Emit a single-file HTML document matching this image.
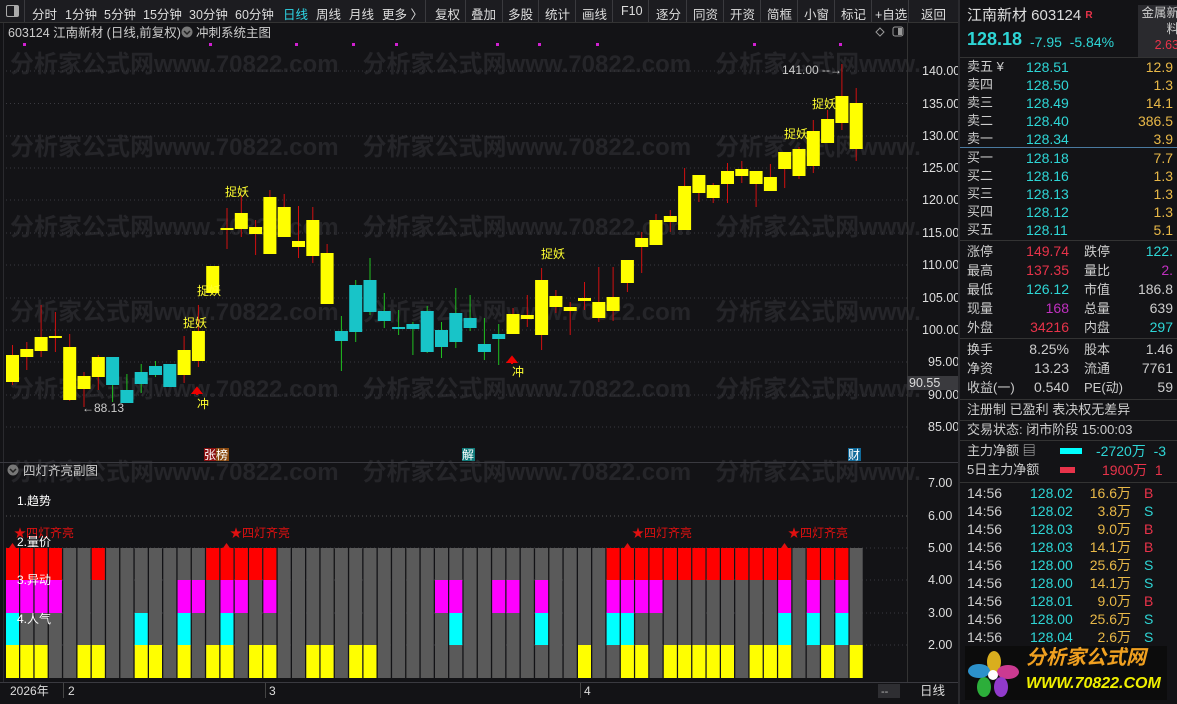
<!DOCTYPE html><html><head><meta charset="utf-8"><style>
body{margin:0;width:1177px;height:704px;background:#131316;overflow:hidden;font-family:"Liberation Sans","Noto Sans CJK SC",sans-serif;position:relative}
.a{position:absolute;white-space:nowrap}
#tb{position:absolute;left:0;top:0;width:958px;height:22px;background:#1c1c20;border-bottom:1px solid #333;font-size:12.5px;color:#ddd}
#tb span{position:absolute;top:4px}
.sep{position:absolute;top:0;width:1px;height:22px;background:#3a3a3e}
#rp{position:absolute;left:958px;top:0;width:219px;height:704px;background:#131316;border-left:2px solid #2a2a2e;font-size:13px;color:#ccc}
#rp .a{line-height:16px}
.hl{position:absolute;left:0;width:219px;height:1px;background:#333}
.c{color:#2ed6d6}.y{color:#e8b848}.r{color:#e8334a}.m{color:#c030c0}
</style></head><body>
<div id="tb">
<div style="position:absolute;left:6px;top:5px;width:11px;height:10px;border:1px solid #aaa;border-radius:2px"><div style="position:absolute;right:0;top:0;width:4px;height:10px;background:#aaa"></div></div>
<div class="sep" style="left:24px"></div>
<span style="left:32px">分时</span><span style="left:65px">1分钟</span><span style="left:104px">5分钟</span><span style="left:143px">15分钟</span><span style="left:189px">30分钟</span><span style="left:235px">60分钟</span><span style="left:283px;color:#2ed6e6">日线</span><span style="left:316px">周线</span><span style="left:349px">月线</span><span style="left:382px">更多 〉</span>
<div class="sep" style="left:425px"></div><span style="left:435px">复权</span><div class="sep" style="left:465px"></div><span style="left:471px">叠加</span><div class="sep" style="left:502px"></div><span style="left:508px">多股</span><div class="sep" style="left:538px"></div><span style="left:545px">统计</span><div class="sep" style="left:575px"></div><span style="left:582px">画线</span><div class="sep" style="left:612px"></div><span style="left:621px">F10</span><div class="sep" style="left:648px"></div><span style="left:656px">逐分</span><div class="sep" style="left:686px"></div><span style="left:693px">同资</span><div class="sep" style="left:723px"></div><span style="left:730px">开资</span><div class="sep" style="left:760px"></div><span style="left:767px">简框</span><div class="sep" style="left:797px"></div><span style="left:804px">小窗</span><div class="sep" style="left:834px"></div><span style="left:841px">标记</span><div class="sep" style="left:871px"></div><span style="left:875px">+自选</span><div class="sep" style="left:908px"></div><span style="left:921px">返回</span>
</div>
<svg class="a" style="left:0;top:0" width="958" height="704" font-family="Liberation Sans,Noto Sans CJK SC,sans-serif">
<g fill="#252529" font-size="24" font-weight="bold">
<text x="10" y="72">分析家公式网www.70822.com　分析家公式网www.70822.com　分析家公式网www.</text>
<text x="10" y="155">分析家公式网www.70822.com　分析家公式网www.70822.com　分析家公式网www.</text>
<text x="10" y="235">分析家公式网www.70822.com　分析家公式网www.70822.com　分析家公式网www.</text>
<text x="10" y="320">分析家公式网www.70822.com　分析家公式网www.70822.com　分析家公式网www.</text>
<text x="10" y="397">分析家公式网www.70822.com　分析家公式网www.70822.com　分析家公式网www.</text>
<text x="10" y="480">分析家公式网www.70822.com　分析家公式网www.70822.com　分析家公式网www.</text>
</g>
<g stroke="#3a3a40" stroke-dasharray="1,3">
<line x1="6" x2="907" y1="71" y2="71"/><line x1="6" x2="907" y1="103.5" y2="103.5"/><line x1="6" x2="907" y1="136" y2="136"/><line x1="6" x2="907" y1="168" y2="168"/><line x1="6" x2="907" y1="200" y2="200"/><line x1="6" x2="907" y1="233" y2="233"/><line x1="6" x2="907" y1="265" y2="265"/><line x1="6" x2="907" y1="298" y2="298"/><line x1="6" x2="907" y1="330" y2="330"/><line x1="6" x2="907" y1="362" y2="362"/><line x1="6" x2="907" y1="395" y2="395"/><line x1="6" x2="907" y1="427" y2="427"/>
<line x1="6" x2="907" y1="516" y2="516"/><line x1="6" x2="907" y1="548" y2="548"/><line x1="6" x2="907" y1="580" y2="580"/><line x1="6" x2="907" y1="613" y2="613"/><line x1="6" x2="907" y1="645" y2="645"/>
</g>
<line x1="907.5" x2="907.5" y1="23" y2="682" stroke="#333"/>
<line x1="3.5" x2="3.5" y1="23" y2="682" stroke="#2a2a2e"/>
<line x1="0" x2="958" y1="462.5" y2="462.5" stroke="#3a3a40"/>
<line x1="0" x2="958" y1="682.5" y2="682.5" stroke="#3a3a40"/>
<text x="8" y="37" fill="#ccc" font-size="12.5">603124 江南新材 (日线,前复权)</text>
<circle cx="187" cy="32" r="5.5" fill="#777"/><path d="M184 31l3 3 3-3" stroke="#222" fill="none" stroke-width="1.5"/>
<text x="196" y="37" fill="#ccc" font-size="12.5">冲刺系统主图</text>
<path d="M880 28l4 4-4 4-4-4z" stroke="#999" fill="none"/><rect x="893" y="27" width="10" height="9" rx="2" stroke="#999" fill="none"/><rect x="898" y="28" width="4" height="7" fill="#999"/>
<g fill="#d020d0"><rect x="23" y="43" width="3" height="3"/><rect x="209" y="43" width="3" height="3"/><rect x="295" y="43" width="3" height="3"/><rect x="352" y="43" width="3" height="3"/><rect x="395" y="43" width="3" height="3"/><rect x="496" y="43" width="3" height="3"/><rect x="538" y="43" width="3" height="3"/><rect x="596" y="43" width="3" height="3"/><rect x="753" y="43" width="3" height="3"/><rect x="839" y="43" width="3" height="3"/></g>
<g fill="#ddd" font-size="12.5">
<text x="922" y="75">140.00</text><text x="922" y="108">135.00</text><text x="922" y="140">130.00</text><text x="922" y="172">125.00</text><text x="922" y="204">120.00</text><text x="922" y="237">115.00</text><text x="922" y="269">110.00</text><text x="922" y="302">105.00</text><text x="922" y="334">100.00</text><text x="928" y="366">95.00</text><text x="928" y="399">90.00</text><text x="928" y="431">85.00</text>
<text x="928" y="487">7.00</text><text x="928" y="520">6.00</text><text x="928" y="552">5.00</text><text x="928" y="584">4.00</text><text x="928" y="617">3.00</text><text x="928" y="649">2.00</text>
</g>
<rect x="907" y="376" width="51" height="14" fill="#3a3a3e"/><text x="909" y="387" fill="#ddd" font-size="12.5">90.55</text>
<g id="cd"></g>
<g id="bars"></g>
<g font-size="12" fill="#ffff30">
<text x="225" y="196">捉妖</text><text x="197" y="295">捉妖</text><text x="183" y="327">捉妖</text><text x="541" y="258">捉妖</text><text x="784" y="138">捉妖</text><text x="812" y="108">捉妖</text>
<text x="197" y="408">冲</text><text x="512" y="376">冲</text>
</g>
<path d="M197 395v-6M193 393l4-5 4 5z" stroke="#e00" fill="#e00" stroke-width="2"/>
<path d="M512 364v-6M508 362l4-5 4 5z" stroke="#e00" fill="#e00" stroke-width="2"/>
<text x="82" y="412" fill="#ccc" font-size="12">←88.13</text>
<text x="782" y="74" fill="#ccc" font-size="12">141.00 --→</text>
<rect x="204" y="448" width="12" height="13" fill="#8a1010"/><rect x="216" y="448" width="13" height="13" fill="#8a4a10"/>
<text x="204" y="459" fill="#fff" font-size="12">张榜</text>
<rect x="462" y="448" width="13" height="13" fill="#107a7a"/><text x="462" y="459" fill="#fff" font-size="12">解</text>
<rect x="848" y="448" width="13" height="13" fill="#106a9a"/><text x="848" y="459" fill="#fff" font-size="12">财</text>
<circle cx="13" cy="470" r="5.5" fill="#777"/><path d="M10 469l3 3 3-3" stroke="#222" fill="none" stroke-width="1.5"/>
<text x="23" y="475" fill="#ccc" font-size="12.5">四灯齐亮副图</text>
<g fill="#fff" font-size="12"><text x="17" y="505">1.趋势</text></g>
<line x1="6" x2="907" y1="516" y2="516" stroke="#555" stroke-dasharray="1,3"/>
<g fill="#e01010" font-size="12"><text x="14" y="537">★四灯齐亮</text><text x="230" y="537">★四灯齐亮</text><text x="632" y="537">★四灯齐亮</text><text x="788" y="537">★四灯齐亮</text></g>
<g fill="#e01010"><path d="M9 548l3.5-5 3.5 5z"/><path d="M223 548l3.5-5 3.5 5z"/><path d="M624 548l3.5-5 3.5 5z"/><path d="M781 548l3.5-5 3.5 5z"/></g>
<g id="lbl" fill="#fff" font-size="12"><text x="17" y="546">2.量价</text><text x="17" y="584">3.异动</text><text x="17" y="623">4.人气</text></g>
<text x="10" y="695" fill="#ddd" font-size="12">2026年</text><text x="68" y="695" fill="#ddd" font-size="12">2</text><text x="269" y="695" fill="#ddd" font-size="12">3</text><text x="584" y="695" fill="#ddd" font-size="12">4</text>
<g stroke="#444"><line x1="63.5" x2="63.5" y1="683" y2="698"/><line x1="265.5" x2="265.5" y1="683" y2="698"/><line x1="580.5" x2="580.5" y1="683" y2="698"/></g>
<rect x="878" y="684" width="22" height="14" fill="#2e2e32"/><text x="881" y="695" fill="#bbb" font-size="11">--</text>
<text x="920" y="695" fill="#ddd" font-size="12.5">日线</text>
</svg>
<script>
var C=[["Y",355,382,345,385],["Y",349,357,342,370],["Y",337,351,305,357],["Y",336,338,312,352],["Y",347,400,334,401],["Y",376,389,372,407],["Y",357,377,355,390],["C",357,385,357,402],["C",390,403,374,403],["C",372,384,364,393],["C",366,375,361,377],["C",364,387,364,387],["Y",350,375,336,383],["Y",331,361,305,367],["Y",266,293,266,293],["Y",228,230,208,249],["Y",213,229,195,237],["Y",227,234,220,255],["Y",197,254,190,254],["Y",207,237,194,237],["Y",241,247,206,258],["Y",220,256,207,263],["Y",253,304,244,304],["C",331,341,316,371],["C",285,332,280,342],["C",280,312,258,315],["C",311,321,293,328],["C",327,329,310,335],["C",324,329,322,355],["C",311,352,306,353],["C",330,347,322,358],["C",313,342,288,348],["C",318,328,295,331],["C",344,352,318,360],["C",334,339,324,365],["Y",314,334,308,334],["Y",315,319,295,327],["Y",280,335,268,350],["Y",296,307,290,313],["Y",307,311,302,335],["Y",298,301,282,310],["Y",302,318,267,322],["Y",297,311,267,321],["Y",260,283,260,292],["Y",238,247,232,273],["Y",220,245,214,245],["Y",216,222,210,232],["Y",186,230,168,230],["Y",175,193,175,202],["Y",185,198,183,203],["Y",171,184,163,203],["Y",169,176,161,183],["Y",171,184,171,207],["Y",177,191,164,191],["Y",152,169,152,188],["Y",149,176,147,179],["Y",131,166,120,173],["Y",119,143,110,143],["Y",96,123,64,130],["Y",103,149,88,161]];
var R=[0,1,2,3,6,14,15,16,17,18,42,43,44,45,46,47,48,49,50,51,52,53,54,56,57,58],M=[0,1,2,3,12,13,15,16,18,30,31,34,35,37,42,43,44,45,54,56,58],Cy=[0,9,12,15,31,37,42,43,54,56,58],Yl=[0,1,2,5,6,9,10,12,14,15,17,18,21,22,24,25,40,43,44,46,47,48,49,50,52,53,54,57,59];
var s="",b="";
for(var i=0;i<60;i++){var x=6+14.3*i,c=C[i],yc=c[0]=="Y";
s+='<line x1="'+(x+6.5)+'" x2="'+(x+6.5)+'" y1="'+c[3]+'" y2="'+c[4]+'" stroke="'+(yc?"#d01010":"#20c020")+'"/>';
s+='<rect x="'+x+'" y="'+c[1]+'" width="13" height="'+Math.max(2,c[2]-c[1])+'" fill="'+(yc?"#ffff00":"#18c4c8")+'"/>';
b+='<rect x="'+x+'" y="548" width="13" height="130" fill="#5a5a5a"/>';
if(R.indexOf(i)>=0)b+='<rect x="'+x+'" y="548" width="13" height="32" fill="#ff0000"/>';
if(M.indexOf(i)>=0)b+='<rect x="'+x+'" y="580" width="13" height="33" fill="#ff00ff"/>';
if(Cy.indexOf(i)>=0)b+='<rect x="'+x+'" y="613" width="13" height="32" fill="#00ffff"/>';
if(Yl.indexOf(i)>=0)b+='<rect x="'+x+'" y="645" width="13" height="33" fill="#ffff00"/>';}
document.getElementById("cd").innerHTML=s;document.getElementById("bars").innerHTML=b;
var l=document.getElementById("lbl");l.parentNode.appendChild(l);
</script>
<div id="rp">
<div class="a" style="left:7px;top:8px;font-size:15px;color:#ddd">江南新材 603124 <span style="color:#e8334a;font-size:10px;font-weight:bold;vertical-align:top">R</span></div>
<div class="a c" style="left:7px;top:31px;font-size:18px;font-weight:bold">128.18</div>
<div class="a c" style="left:70px;top:34px;font-size:14px">-7.95 &nbsp;-5.84%</div>
<div class="a" style="left:178px;top:5px;width:41px;height:52px;background:#2a2a2e;font-size:12.5px;color:#ccc;line-height:16px;text-align:right">金属新<br>料<br><span class="r">2.63</span></div>
<div class="hl" style="top:57px"></div>
<div class="a" style="left:7px;top:58px;line-height:18px">卖五 ¥<br>卖四<br>卖三<br>卖二<br>卖一</div>
<div class="a c" style="left:66px;top:58px;line-height:18px;font-size:14px">128.51<br>128.50<br>128.49<br>128.40<br>128.34</div>
<div class="a y" style="right:6px;top:58px;line-height:18px;font-size:14px;text-align:right">12.9<br>1.3<br>14.1<br>386.5<br>3.9</div>
<div class="hl" style="top:147px;background:#4a7aa0"></div>
<div class="a" style="left:7px;top:149px;line-height:18px">买一<br>买二<br>买三<br>买四<br>买五</div>
<div class="a c" style="left:66px;top:149px;line-height:18px;font-size:14px">128.18<br>128.16<br>128.13<br>128.12<br>128.11</div>
<div class="a y" style="right:6px;top:149px;line-height:18px;font-size:14px;text-align:right">7.7<br>1.3<br>1.3<br>1.3<br>5.1</div>
<div class="hl" style="top:240px"></div>
<div class="a" style="left:7px;top:242px;line-height:19px">涨停<br>最高<br>最低<br>现量<br>外盘</div>
<div class="a" style="right:110px;top:242px;line-height:19px;font-size:14px;text-align:right"><span class="r">149.74</span><br><span class="r">137.35</span><br><span class="c">126.12</span><br><span class="m">168</span><br><span class="r">34216</span></div>
<div class="a" style="left:124px;top:242px;line-height:19px">跌停<br>量比<br>市值<br>总量<br>内盘</div>
<div class="a" style="right:6px;top:242px;line-height:19px;font-size:14px;text-align:right"><span class="c">122.</span><br><span class="m">2.</span><br>186.8<br>639<br><span class="c">297</span></div>
<div class="hl" style="top:338px"></div>
<div class="a" style="left:7px;top:340px;line-height:19px">换手<br>净资<br>收益(一)</div>
<div class="a" style="right:110px;top:340px;line-height:19px;font-size:14px;text-align:right">8.25%<br>13.23<br>0.540</div>
<div class="a" style="left:124px;top:340px;line-height:19px">股本<br>流通<br>PE(动)</div>
<div class="a" style="right:6px;top:340px;line-height:19px;font-size:14px;text-align:right">1.46<br>7761<br>59</div>
<div class="hl" style="top:399px"></div>
<div class="a" style="left:7px;top:402px">注册制 已盈利 表决权无差异</div>
<div class="hl" style="top:420px"></div>
<div class="a" style="left:7px;top:422px">交易状态: 闭市阶段 15:00:03</div>
<div class="hl" style="top:440px"></div>
<div class="a" style="left:7px;top:443px">主力净额 ▤</div>
<div class="a" style="left:100px;top:448px;width:22px;height:6px;background:#00ffff"></div>
<div class="a c" style="left:136px;top:443px;font-size:14px">-2720万 &nbsp;-3</div>
<div class="a" style="left:7px;top:462px">5日主力净额</div>
<div class="a" style="left:100px;top:467px;width:15px;height:6px;background:#e8334a"></div>
<div class="a r" style="left:142px;top:462px;font-size:14px">1900万 &nbsp;1</div>
<div class="hl" style="top:482px"></div>
<div class="a" style="left:7px;top:484px;line-height:18px;font-size:14px">14:56<br>14:56<br>14:56<br>14:56<br>14:56<br>14:56<br>14:56<br>14:56<br>14:56</div>
<div class="a c" style="left:70px;top:484px;line-height:18px;font-size:14px">128.02<br>128.02<br>128.03<br>128.03<br>128.00<br>128.00<br>128.01<br>128.00<br>128.04</div>
<div class="a y" style="right:48px;top:484px;line-height:18px;font-size:14px;text-align:right">16.6万<br>3.8万<br>9.0万<br>14.1万<br>25.6万<br>14.1万<br>9.0万<br>25.6万<br>2.6万</div>
<div class="a" style="left:184px;top:484px;line-height:18px;font-size:14px"><span class="r">B</span><br><span class="c">S</span><br><span class="r">B</span><br><span class="r">B</span><br><span class="c">S</span><br><span class="c">S</span><br><span class="r">B</span><br><span class="c">S</span><br><span class="c">S</span></div>
<div class="a" style="left:5px;top:646px;width:202px;height:54px;background:#0c0c0c"></div>
<svg class="a" style="left:8px;top:650px" width="52" height="48"><g opacity=".9"><ellipse cx="26" cy="12" rx="7" ry="11" fill="#f0c020"/><ellipse cx="40" cy="22" rx="11" ry="7" fill="#e040a0"/><ellipse cx="33" cy="37" rx="7" ry="10" fill="#a040e0"/><ellipse cx="16" cy="37" rx="7" ry="10" fill="#30c040"/><ellipse cx="11" cy="21" rx="11" ry="7" fill="#30a0e0"/></g><circle cx="25" cy="25" r="5" fill="#fff"/></svg>
<div class="a" style="left:66px;top:650px;font-size:20px;font-weight:bold;color:#f0a020;font-style:italic">分析家公式网</div>
<div class="a" style="left:66px;top:676px;font-size:16px;font-weight:bold;color:#f0f000;font-style:italic">WWW.70822.COM</div>
</div>
</body></html>
